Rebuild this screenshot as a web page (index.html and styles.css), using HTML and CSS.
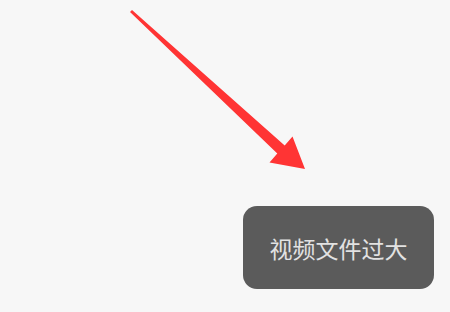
FILE: index.html
```html
<!DOCTYPE html>
<html lang="zh">
<head>
<meta charset="utf-8">
<link rel="stylesheet" href="styles.css">
</head>
<body>
<main class="screen">
  <svg class="arrow" width="450" height="312" viewBox="0 0 450 312" aria-hidden="true">
    <polygon fill="#ff3434" points="132,9.9 284.7,145.4 292.5,136.5 305,169 269.5,162.5 277.3,153.6 130,12.1"/>
  </svg>
  <div class="toast">视频文件过大</div>
</main>
</body>
</html>
```
FILE: styles.css
```css
html, body {
  margin: 0;
  padding: 0;
  background: #f7f7f7;
}
.screen {
  position: relative;
  width: 450px;
  height: 312px;
  box-sizing: border-box;
  display: flex;
  align-items: flex-end;
  justify-content: flex-end;
  padding: 0 16px 23px 0;
  overflow: hidden;
}
.arrow {
  position: absolute;
  left: 0;
  top: 0;
}
.toast {
  width: 191px;
  height: 83px;
  border-radius: 14px;
  background: #5b5b5b;
  color: #e2e2e2;
  font-family: "Noto Sans CJK SC", "Noto Sans", sans-serif;
  font-size: 23px;
  display: flex;
  align-items: center;
  justify-content: center;
}
```
